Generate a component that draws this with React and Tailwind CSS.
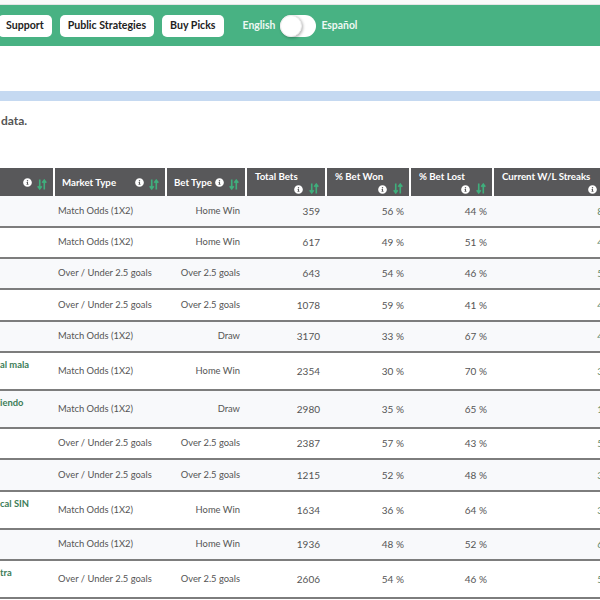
import { FaInfoCircle } from 'react-icons/fa';

const rows = [
  { name: '', market: 'Match Odds (1X2)', bet: 'Home Win', total: 359, won: 56, lost: 44, streak: '8', h: 'h-[31px]' },
  { name: '', market: 'Match Odds (1X2)', bet: 'Home Win', total: 617, won: 49, lost: 51, streak: '4', h: 'h-[31px]' },
  { name: '', market: 'Over / Under 2.5 goals', bet: 'Over 2.5 goals', total: 643, won: 54, lost: 46, streak: '5', h: 'h-[31px]' },
  { name: '', market: 'Over / Under 2.5 goals', bet: 'Over 2.5 goals', total: 1078, won: 59, lost: 41, streak: '4', h: 'h-[32px]' },
  { name: '', market: 'Match Odds (1X2)', bet: 'Draw', total: 3170, won: 33, lost: 67, streak: '4', h: 'h-[31px]' },
  { name: 'al mala', market: 'Match Odds (1X2)', bet: 'Home Win', total: 2354, won: 30, lost: 70, streak: '3', h: 'h-[38px]' },
  { name: 'iendo', market: 'Match Odds (1X2)', bet: 'Draw', total: 2980, won: 35, lost: 65, streak: '1', h: 'h-[38px]' },
  { name: '', market: 'Over / Under 2.5 goals', bet: 'Over 2.5 goals', total: 2387, won: 57, lost: 43, streak: '5', h: 'h-[31px]' },
  { name: '', market: 'Over / Under 2.5 goals', bet: 'Over 2.5 goals', total: 1215, won: 52, lost: 48, streak: '3', h: 'h-[32px]' },
  { name: 'cal SIN', market: 'Match Odds (1X2)', bet: 'Home Win', total: 1634, won: 36, lost: 64, streak: '3', h: 'h-[38px]' },
  { name: '', market: 'Match Odds (1X2)', bet: 'Home Win', total: 1936, won: 48, lost: 52, streak: '6', h: 'h-[31px]' },
  { name: 'tra', market: 'Over / Under 2.5 goals', bet: 'Over 2.5 goals', total: 2606, won: 54, lost: 46, streak: '5', h: 'h-[38px]' },
];

const SortIcon = () => (
  <svg viewBox="0 0 11 12" className="w-[10px] h-[11px] shrink-0 text-[#3fae7c]" fill="none" stroke="currentColor" strokeWidth="1.8">
    <path d="M3 0.5V10.5M0.8 8L3 10.8L5.2 8" />
    <path d="M8 11.5V1.5M5.8 4L8 1.2L10.2 4" />
  </svg>
);

const Info = () => <FaInfoCircle className="w-[9px] h-[9px] text-white shrink-0" />;

const HeadCell = ({ title, wide }) => (
  <th className="border-r-2 border-white bg-[#58585a] p-0 align-top font-bold text-white">
    {wide ? (
      <div className="flex h-[28px] flex-col pl-[8px] pr-[6px] pt-[2px]">
        <div className="text-left text-[9.7px] leading-[12px] whitespace-nowrap">{title}</div>
        <div className="flex items-center justify-end gap-[6px]">
          <span className="mt-[3px]"><Info /></span>
          <SortIcon />
        </div>
      </div>
    ) : (
      <div className="flex h-[28px] items-center justify-between pl-[7px] pr-[6px]">
        <span className="text-[9.7px] whitespace-nowrap">{title}</span>
        <span className="flex items-center gap-[5px]">
          <Info />
          <span className="mt-[5px]"><SortIcon /></span>
        </span>
      </div>
    )}
  </th>
);

const navLinks = ['Support', 'Public Strategies', 'Buy Picks'];

export default function App() {
  return (
    <div className="h-[600px] w-[600px] overflow-hidden bg-white font-['Lato',sans-serif] text-[#555]">
      <div className="h-[5px] border-b border-[#e5e5e5] bg-[#fafafa]" />
      <div className="flex h-[41px] items-center gap-[8px] bg-[#48b283] pr-4 -ml-[2px]">
        {navLinks.map((item) => (
          <a key={item} className="flex h-[22px] items-center rounded-[5px] bg-white px-[8px] text-[10.6px] font-bold text-[#222]">
            {item}
          </a>
        ))}
        <div className="ml-[11px] flex items-center gap-[5px] text-[10.4px] font-bold text-[#eef8f3]">
          <span>English</span>
          <span className="relative block h-[22px] w-[36px] rounded-full bg-white">
            <span className="absolute left-0 top-0 h-[22px] w-[22px] rounded-full border border-[#eee] bg-white shadow-[1px_1px_3px_rgba(0,0,0,0.3)]" />
          </span>
          <span>Español</span>
        </div>
      </div>
      <div className="h-[45px]" />
      <div className="h-[10px] bg-[#c5d9f1]" />
      <p className="mt-[12px] h-[55px] pl-[1px] text-[12px] font-bold leading-[15px] text-[#555]">data.</p>
      <table className="w-[620px] table-fixed border-collapse text-[9.4px]">
        <colgroup>
          <col className="w-[54px]" />
          <col className="w-[112px]" />
          <col className="w-[80px]" />
          <col className="w-[80px]" />
          <col className="w-[84px]" />
          <col className="w-[83px]" />
          <col className="w-[127px]" />
        </colgroup>
        <thead>
          <tr>
            <HeadCell title="" />
            <HeadCell title="Market Type" />
            <HeadCell title="Bet Type" />
            <HeadCell title="Total Bets" wide />
            <HeadCell title="% Bet Won" wide />
            <HeadCell title="% Bet Lost" wide />
            <HeadCell title="Current W/L Streaks" wide />
          </tr>
        </thead>
        <tbody>
          {rows.map((row, i) => (
            <tr key={row.total} className={`${row.h} border-b-2 border-[#7d7d7d] ${i % 2 === 0 ? 'bg-[#f8f9fb]' : 'bg-white'}`}>
              <td className="p-0 align-top">
                <div className="whitespace-nowrap pt-[5px] text-[9.4px] font-bold leading-[13px] text-[#3c7d58]">{row.name}</div>
              </td>
              <td className="pl-[4px] whitespace-nowrap">{row.market}</td>
              <td className="pr-[6px] text-right whitespace-nowrap">{row.bet}</td>
              <td className="pr-[6px] text-right text-[10px]">{row.total}</td>
              <td className="pr-[6px] text-right text-[10px]">{row.won} %</td>
              <td className="pr-[6px] text-right text-[10px]">{row.lost} %</td>
              <td className="pr-[17px] text-right text-[10px] text-[#5f8a6d]">{row.streak}</td>
            </tr>
          ))}
        </tbody>
      </table>
    </div>
  );
}
